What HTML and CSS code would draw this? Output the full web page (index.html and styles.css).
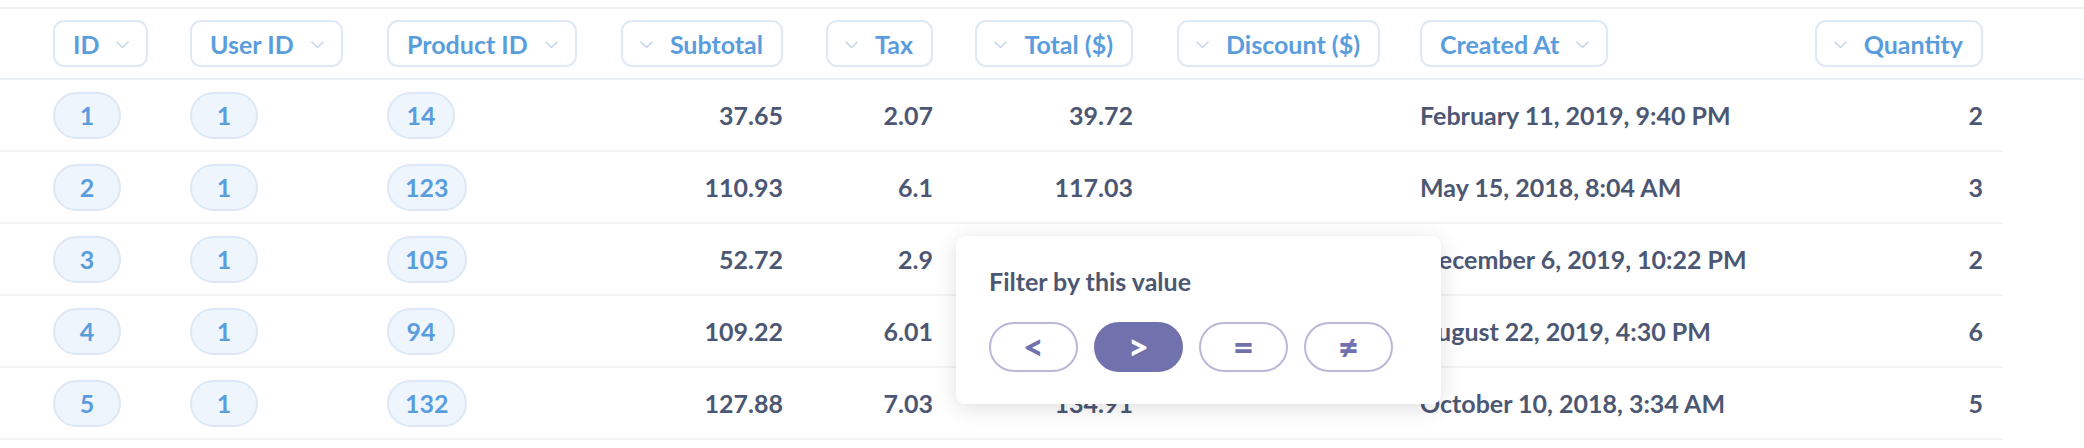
FILE: index.html
```html
<!DOCTYPE html>
<html>
<head>
<meta charset="utf-8">
<link rel="stylesheet" href="styles.css">
</head>
<body>
<div class="table">
  <div class="header">
    <div class="row-grid">
      <div class="cell left"><div class="hpill"><span>ID</span><svg class="chev" viewBox="0 0 13 8"><path d="M1 1.2 L6.5 6.5 L12 1.2"/></svg></div></div>
      <div class="cell left"><div class="hpill"><span>User ID</span><svg class="chev" viewBox="0 0 13 8"><path d="M1 1.2 L6.5 6.5 L12 1.2"/></svg></div></div>
      <div class="cell left"><div class="hpill"><span>Product ID</span><svg class="chev" viewBox="0 0 13 8"><path d="M1 1.2 L6.5 6.5 L12 1.2"/></svg></div></div>
      <div class="cell right"><div class="hpill"><svg class="chev" viewBox="0 0 13 8"><path d="M1 1.2 L6.5 6.5 L12 1.2"/></svg><span>Subtotal</span></div></div>
      <div class="cell right"><div class="hpill"><svg class="chev" viewBox="0 0 13 8"><path d="M1 1.2 L6.5 6.5 L12 1.2"/></svg><span>Tax</span></div></div>
      <div class="cell right"><div class="hpill"><svg class="chev" viewBox="0 0 13 8"><path d="M1 1.2 L6.5 6.5 L12 1.2"/></svg><span>Total ($)</span></div></div>
      <div class="cell right"><div class="hpill"><svg class="chev" viewBox="0 0 13 8"><path d="M1 1.2 L6.5 6.5 L12 1.2"/></svg><span>Discount ($)</span></div></div>
      <div class="cell left"><div class="hpill"><span>Created At</span><svg class="chev" viewBox="0 0 13 8"><path d="M1 1.2 L6.5 6.5 L12 1.2"/></svg></div></div>
      <div class="cell right"><div class="hpill"><svg class="chev" viewBox="0 0 13 8"><path d="M1 1.2 L6.5 6.5 L12 1.2"/></svg><span>Quantity</span></div></div>
    </div>
  </div>

  <div class="body">
    <div class="row row-grid">
      <div class="cell left"><span class="vpill">1</span></div>
      <div class="cell left"><span class="vpill">1</span></div>
      <div class="cell left"><span class="vpill">14</span></div>
      <div class="cell right">37.65</div>
      <div class="cell right">2.07</div>
      <div class="cell right">39.72</div>
      <div class="cell right"></div>
      <div class="cell left">February 11, 2019, 9:40 PM</div>
      <div class="cell right">2</div>
    </div>
    <div class="row row-grid">
      <div class="cell left"><span class="vpill">2</span></div>
      <div class="cell left"><span class="vpill">1</span></div>
      <div class="cell left"><span class="vpill">123</span></div>
      <div class="cell right">110.93</div>
      <div class="cell right">6.1</div>
      <div class="cell right">117.03</div>
      <div class="cell right"></div>
      <div class="cell left">May 15, 2018, 8:04 AM</div>
      <div class="cell right">3</div>
    </div>
    <div class="row row-grid">
      <div class="cell left"><span class="vpill">3</span></div>
      <div class="cell left"><span class="vpill">1</span></div>
      <div class="cell left"><span class="vpill">105</span></div>
      <div class="cell right">52.72</div>
      <div class="cell right">2.9</div>
      <div class="cell right"></div>
      <div class="cell right"></div>
      <div class="cell left">December 6, 2019, 10:22 PM</div>
      <div class="cell right">2</div>
    </div>
    <div class="row row-grid">
      <div class="cell left"><span class="vpill">4</span></div>
      <div class="cell left"><span class="vpill">1</span></div>
      <div class="cell left"><span class="vpill">94</span></div>
      <div class="cell right">109.22</div>
      <div class="cell right">6.01</div>
      <div class="cell right"></div>
      <div class="cell right"></div>
      <div class="cell left">August 22, 2019, 4:30 PM</div>
      <div class="cell right">6</div>
    </div>
    <div class="row row-grid">
      <div class="cell left"><span class="vpill">5</span></div>
      <div class="cell left"><span class="vpill">1</span></div>
      <div class="cell left"><span class="vpill">132</span></div>
      <div class="cell right">127.88</div>
      <div class="cell right">7.03</div>
      <div class="cell right">134.91</div>
      <div class="cell right"></div>
      <div class="cell left">October 10, 2018, 3:34 AM</div>
      <div class="cell right">5</div>
    </div>
  </div>

  <div class="popover">
    <div class="pop-title">Filter by this value</div>
    <div class="pop-buttons">
      <button class="op">&lt;</button>
      <button class="op active">&gt;</button>
      <button class="op">=</button>
      <button class="op">≠</button>
    </div>
  </div>
</div>
</body>
</html>
```

FILE: styles.css
```css
* { box-sizing: border-box; }

html, body {
  margin: 0;
  padding: 0;
  background: #ffffff;
}

body {
  font-family: Lato, "Noto Sans", sans-serif;
  font-weight: 700;
  font-size: 25px;
  color: #4c5773;
}

.table {
  position: relative;
  width: 2084px;
  height: 448px;
  padding-top: 7px;
}

.row-grid {
  display: grid;
  grid-template-columns: 137px 197px 233px 203px 150px 200px 247px 397px 206px;
  padding-left: 33px;
  width: 2003px;
}

.header {
  border-top: 2px solid #eef0f4;
  border-bottom: 2px solid #eceff3;
  height: 73px;
}

.header .row-grid {
  height: 69px;
}

.cell {
  display: flex;
  align-items: center;
  padding: 0 20px;
  white-space: nowrap;
}

.cell.left { justify-content: flex-start; }
.cell.right { justify-content: flex-end; }

.hpill {
  display: flex;
  align-items: center;
  gap: 17px;
  height: 47px;
  padding: 0 17px 0 18px;
  border: 2px solid #dfe9f6;
  border-radius: 11px;
  color: #5a9ddd;
  background: #ffffff;
}

.cell.right .hpill {
  padding: 0 18px 0 17px;
}

.chev {
  width: 13px;
  height: 8px;
  fill: none;
  stroke: #c9d7eb;
  stroke-width: 1.6;
  stroke-linecap: round;
  stroke-linejoin: round;
  margin-top: 2px;
}

.row {
  height: 72px;
  border-bottom: 2px solid #f2f3f5;
}

.vpill {
  display: inline-flex;
  align-items: center;
  justify-content: center;
  min-width: 68px;
  height: 47px;
  padding: 0 16px;
  border: 2px solid #dde8f6;
  border-radius: 24px;
  background: #eff5fc;
  color: #5a9ddd;
}

.popover {
  position: absolute;
  left: 956px;
  top: 236px;
  width: 485px;
  height: 168px;
  padding: 30px 33px 0 33px;
  background: #ffffff;
  border-radius: 9px;
  box-shadow: 0 4px 22px rgba(0, 0, 0, 0.13);
}

.pop-title {
  line-height: 30px;
  color: #4c5773;
}

.pop-buttons {
  display: flex;
  gap: 16px;
  margin-top: 26px;
}

.op {
  width: 89px;
  height: 50px;
  border: 2px solid #b9b8d9;
  border-radius: 25px;
  background: #ffffff;
  color: #7172ad;
  font-family: Lato, "Noto Sans", sans-serif;
  font-weight: 900;
  font-size: 36px;
  line-height: 1;
  padding: 0 0 2px 0;
  display: flex;
  align-items: center;
  justify-content: center;
}

.op.active {
  background: #7172ad;
  border-color: #7172ad;
  color: #ffffff;
}
```
